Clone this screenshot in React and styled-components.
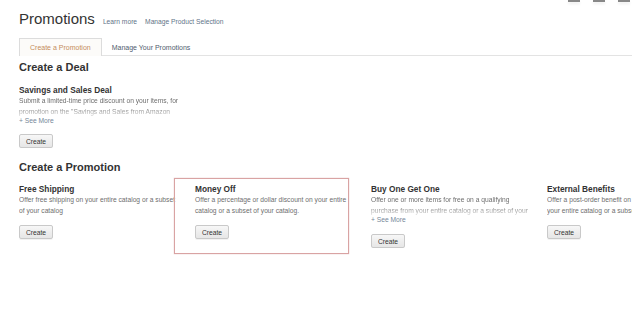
import React from "react";
import styled, { createGlobalStyle } from "styled-components";

const GlobalStyle = createGlobalStyle`
  html, body {
    margin: 0;
    padding: 0;
    background: #fff;
  }
  body {
    font-family: "Liberation Sans", Arial, sans-serif;
    color: #333;
  }
`;

const Page = styled.div`
  width: 632px;
  height: 323px;
  overflow: hidden;
  padding-left: 19px;
  box-sizing: border-box;
`;

const Header = styled.div`
  display: flex;
  align-items: baseline;
  gap: 8px;
  padding-top: 10px;
  height: 29px;
  box-sizing: border-box;
`;

const Title = styled.h1`
  margin: 0;
  font-size: 15px;
  font-weight: normal;
  color: #333;
  line-height: 18px;
`;

const HeaderLink = styled.a`
  font-size: 6.7px;
  color: #5f7488;
  text-decoration: none;
`;

const WindowControls = styled.div`
  margin-left: auto;
  margin-right: 2px;
  align-self: flex-start;
  margin-top: -10px;
  display: flex;
  gap: 13px;
`;

const Control = styled.span`
  width: 12px;
  height: 2px;
  background: #888;
  box-shadow: 0 2px 3px rgba(0, 0, 0, 0.08);
`;

const Tabs = styled.div`
  display: flex;
  align-items: flex-end;
  margin-top: 9px;
  border-bottom: 1px solid #e3e3e3;
  height: 17px;
`;

const Tab = styled.div`
  box-sizing: border-box;
  display: flex;
  align-items: center;
  padding: 0 ${(p) => (p.$active ? "10px" : "9px")};
  font-size: 7px;
  color: ${(p) => (p.$active ? "#c58d5c" : "#4f5d6e")};
  background: ${(p) => (p.$active ? "#fcfbf9" : "transparent")};
  border: 1px solid ${(p) => (p.$active ? "#dcdcdc" : "transparent")};
  border-bottom: none;
  margin-bottom: ${(p) => (p.$active ? "-1px" : "0")};
  height: ${(p) => (p.$active ? "18px" : "17px")};
`;

const Section = styled.section`
  margin-top: ${(p) => p.$top || "6px"};
`;

const SectionTitle = styled.h2`
  margin: 0;
  font-size: 11px;
  font-weight: bold;
  color: #333;
  line-height: 13px;
`;

const Grid = styled.div`
  display: grid;
  grid-template-columns: repeat(4, 176px);
  margin-top: ${(p) => p.$gap || "10px"};
`;

const Offer = styled.div`
  position: relative;
  overflow: ${(p) => (p.$highlight ? "visible" : "hidden")};
  ${(p) =>
    p.$highlight &&
    `
    &::before {
      content: "";
      position: absolute;
      left: -21px;
      top: -6px;
      width: 173px;
      height: 74px;
      border: 1px solid #d9a3a3;
      box-shadow: 0 0 1px rgba(190, 110, 110, 0.5);
      pointer-events: none;
    }
  `}
`;

const OfferTitle = styled.h3`
  margin: 0;
  font-size: 8.3px;
  font-weight: bold;
  color: #333;
  line-height: 10px;
`;

const Desc = styled.div`
  margin-top: 1px;
  font-size: 6.7px;
  line-height: 10.5px;
  color: #6e6e6e;
  ${(p) =>
    p.$fade &&
    `
    -webkit-mask-image: linear-gradient(to bottom, #000 50%, rgba(0,0,0,0.2) 100%);
    mask-image: linear-gradient(to bottom, #000 50%, rgba(0,0,0,0.2) 100%);
  `}
`;

const Line = styled.div`
  white-space: nowrap;
`;

const SeeMore = styled.a`
  display: block;
  margin-top: -1px;
  font-size: 6.7px;
  line-height: 9px;
  color: #76889a;
  text-decoration: none;
`;

const Button = styled.button`
  display: block;
  margin-top: ${(p) => p.$top || "9px"};
  height: 14px;
  padding: 0 6px;
  font-family: inherit;
  font-size: 6.7px;
  color: #333;
  background: linear-gradient(#f7f7f7, #e6e6e6);
  border: 1px solid #c9c9c9;
  border-radius: 2px;
  box-shadow: 0 1px 0 rgba(0, 0, 0, 0.05);
`;

const promotions = [
  {
    title: "Free Shipping",
    lines: ["Offer free shipping on your entire catalog or a subset", "of your catalog"],
  },
  {
    title: "Money Off",
    lines: ["Offer a percentage or dollar discount on your entire", "catalog or a subset of your catalog."],
    highlight: true,
  },
  {
    title: "Buy One Get One",
    lines: ["Offer one or more items for free on a qualifying", "purchase from your entire catalog or a subset of your"],
    more: true,
  },
  {
    title: "External Benefits",
    lines: ["Offer a post-order benefit on", "your entire catalog or a subset"],
  },
];

const OfferCard = ({ offer }) => (
  <Offer $highlight={offer.highlight}>
    <OfferTitle>{offer.title}</OfferTitle>
    <Desc $fade={offer.more}>
      {offer.lines.map((l) => (
        <Line key={l}>{l}</Line>
      ))}
    </Desc>
    {offer.more && <SeeMore>+ See More</SeeMore>}
    <Button $top={offer.more ? "10px" : "9px"}>Create</Button>
  </Offer>
);

export default function App() {
  return (
    <Page>
      <GlobalStyle />
      <Header>
        <Title>Promotions</Title>
        <HeaderLink>Learn more</HeaderLink>
        <HeaderLink>Manage Product Selection</HeaderLink>
        <WindowControls>
          <Control />
          <Control />
          <Control />
        </WindowControls>
      </Header>
      <Tabs>
        <Tab $active>Create a Promotion</Tab>
        <Tab>Manage Your Promotions</Tab>
      </Tabs>

      <Section $top="5px">
        <SectionTitle>Create a Deal</SectionTitle>
        <Grid $gap="11px">
          <Offer>
            <OfferTitle>Savings and Sales Deal</OfferTitle>
            <Desc $fade>
              <Line>Submit a limited-time price discount on your items, for</Line>
              <Line>promotion on the "Savings and Sales from Amazon</Line>
            </Desc>
            <SeeMore>+ See More</SeeMore>
            <Button $top="9px">Create</Button>
          </Offer>
        </Grid>
      </Section>

      <Section $top="13px">
        <SectionTitle>Create a Promotion</SectionTitle>
        <Grid $gap="10px">
          {promotions.map((o) => (
            <OfferCard key={o.title} offer={o} />
          ))}
        </Grid>
      </Section>
    </Page>
  );
}
